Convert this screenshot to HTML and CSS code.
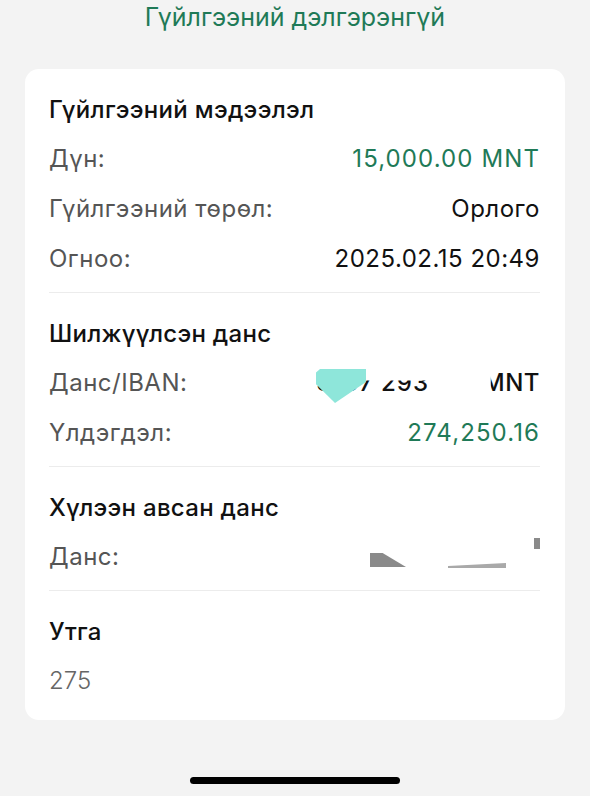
FILE: index.html
```html
<!DOCTYPE html>
<html lang="mn">
<head>
<meta charset="utf-8">
<link rel="stylesheet" href="styles.css">
</head>
<body>
<div class="screen">
  <h1 class="title">Гүйлгээний дэлгэрэнгүй</h1>
  <div class="card">
    <section class="section">
      <h2 class="heading">Гүйлгээний мэдээлэл</h2>
      <div class="row"><span class="label">Дүн:</span><span class="value green">15,000.00 MNT</span></div>
      <div class="row"><span class="label">Гүйлгээний төрөл:</span><span class="value">Орлого</span></div>
      <div class="row"><span class="label">Огноо:</span><span class="value">2025.02.15 20:49</span></div>
    </section>
    <section class="section">
      <h2 class="heading">Шилжүүлсэн данс</h2>
      <div class="row"><span class="label">Данс/IBAN:</span>
        <span class="value redacted-iban"><span class="iban-part">5187 293</span><span class="iban-gap"></span><span class="iban-end">MNT</span><span class="teal-mark"></span></span>
      </div>
      <div class="row"><span class="label">Үлдэгдэл:</span><span class="value green">274,250.16</span></div>
    </section>
    <section class="section">
      <h2 class="heading">Хүлээн авсан данс</h2>
      <div class="row"><span class="label">Данс:</span>
        <span class="value redacted-acc"><span class="wedge wedge-left"></span><span class="wedge wedge-mid"></span><span class="wedge wedge-right"></span></span>
      </div>
    </section>
    <section class="section last">
      <h2 class="heading">Утга</h2>
      <div class="row"><span class="label small">275</span></div>
    </section>
  </div>
  <div class="home-bar"></div>
</div>
</body>
</html>
```

FILE: styles.css
```css
* { box-sizing: border-box; }
html, body {
  margin: 0;
  padding: 0;
  background: #f3f3f3;
  font-family: Inter, "Noto Sans", sans-serif;
}
.screen {
  width: 590px;
  height: 796px;
  display: flex;
  flex-direction: column;
  align-items: center;
}
.title {
  margin: 0;
  height: 34px;
  line-height: 34px;
  font-size: 25px;
  font-weight: 400;
  color: #1f7a57;
  text-align: center;
}
.card {
  margin-top: 35px;
  width: 540px;
  background: #fff;
  border-radius: 14px;
  padding: 0 25px 0 24px;
  display: flex;
  flex-direction: column;
}
.section {
  padding: 17px 0 9px;
  border-bottom: 1px solid #ececec;
}
.section.last {
  border-bottom: none;
  padding-bottom: 15px;
}
.heading {
  margin: 0;
  height: 47px;
  line-height: 47px;
  font-size: 24px;
  font-weight: 500;
  letter-spacing: 0.3px;
  color: #111;
}
.row {
  height: 50px;
  display: flex;
  align-items: center;
  justify-content: space-between;
  font-size: 24px;
  letter-spacing: 0.5px;
}
.label {
  color: #555;
}
.label.small {
  color: #666;
  font-weight: 300;
  letter-spacing: 0;
}
.value {
  color: #111;
}
.value.green {
  color: #1f7a57;
  letter-spacing: 1.1px;
}
.redacted-iban {
  position: relative;
  display: flex;
  align-items: center;
  width: 224px;
  height: 50px;
}
.iban-part {
  color: #111;
  font-weight: 500;
  letter-spacing: 1px;
  width: 112px;
  overflow: hidden;
  white-space: nowrap;
  clip-path: inset(45% 0 0 0);
}
.iban-gap { flex: 1; }
.iban-end {
  color: #111;
  font-weight: 500;
  clip-path: inset(0 0 0 8px);
}
.teal-mark {
  position: absolute;
  left: 0;
  top: 12px;
  width: 50px;
  height: 34px;
  background: #8ee6da;
  clip-path: polygon(8% 0, 100% 0, 100% 38%, 38% 100%, 0 45%, 0 10%);
}
.redacted-acc {
  position: relative;
  width: 170px;
  height: 50px;
}
.wedge {
  position: absolute;
  background: #8a8a8a;
}
.wedge-left {
  left: 0;
  top: 22px;
  width: 36px;
  height: 14px;
  clip-path: polygon(0 0, 35% 0, 100% 100%, 0 100%);
}
.wedge-mid {
  left: 78px;
  top: 32px;
  width: 58px;
  height: 5px;
  background: #a9a9a9;
  clip-path: polygon(0 60%, 100% 0, 100% 100%, 0 100%);
}
.wedge-right {
  left: 164px;
  top: 7px;
  width: 6px;
  height: 11px;
}
.home-bar {
  margin-top: auto;
  margin-bottom: 12px;
  width: 210px;
  height: 7px;
  border-radius: 4px;
  background: #000;
}
```
